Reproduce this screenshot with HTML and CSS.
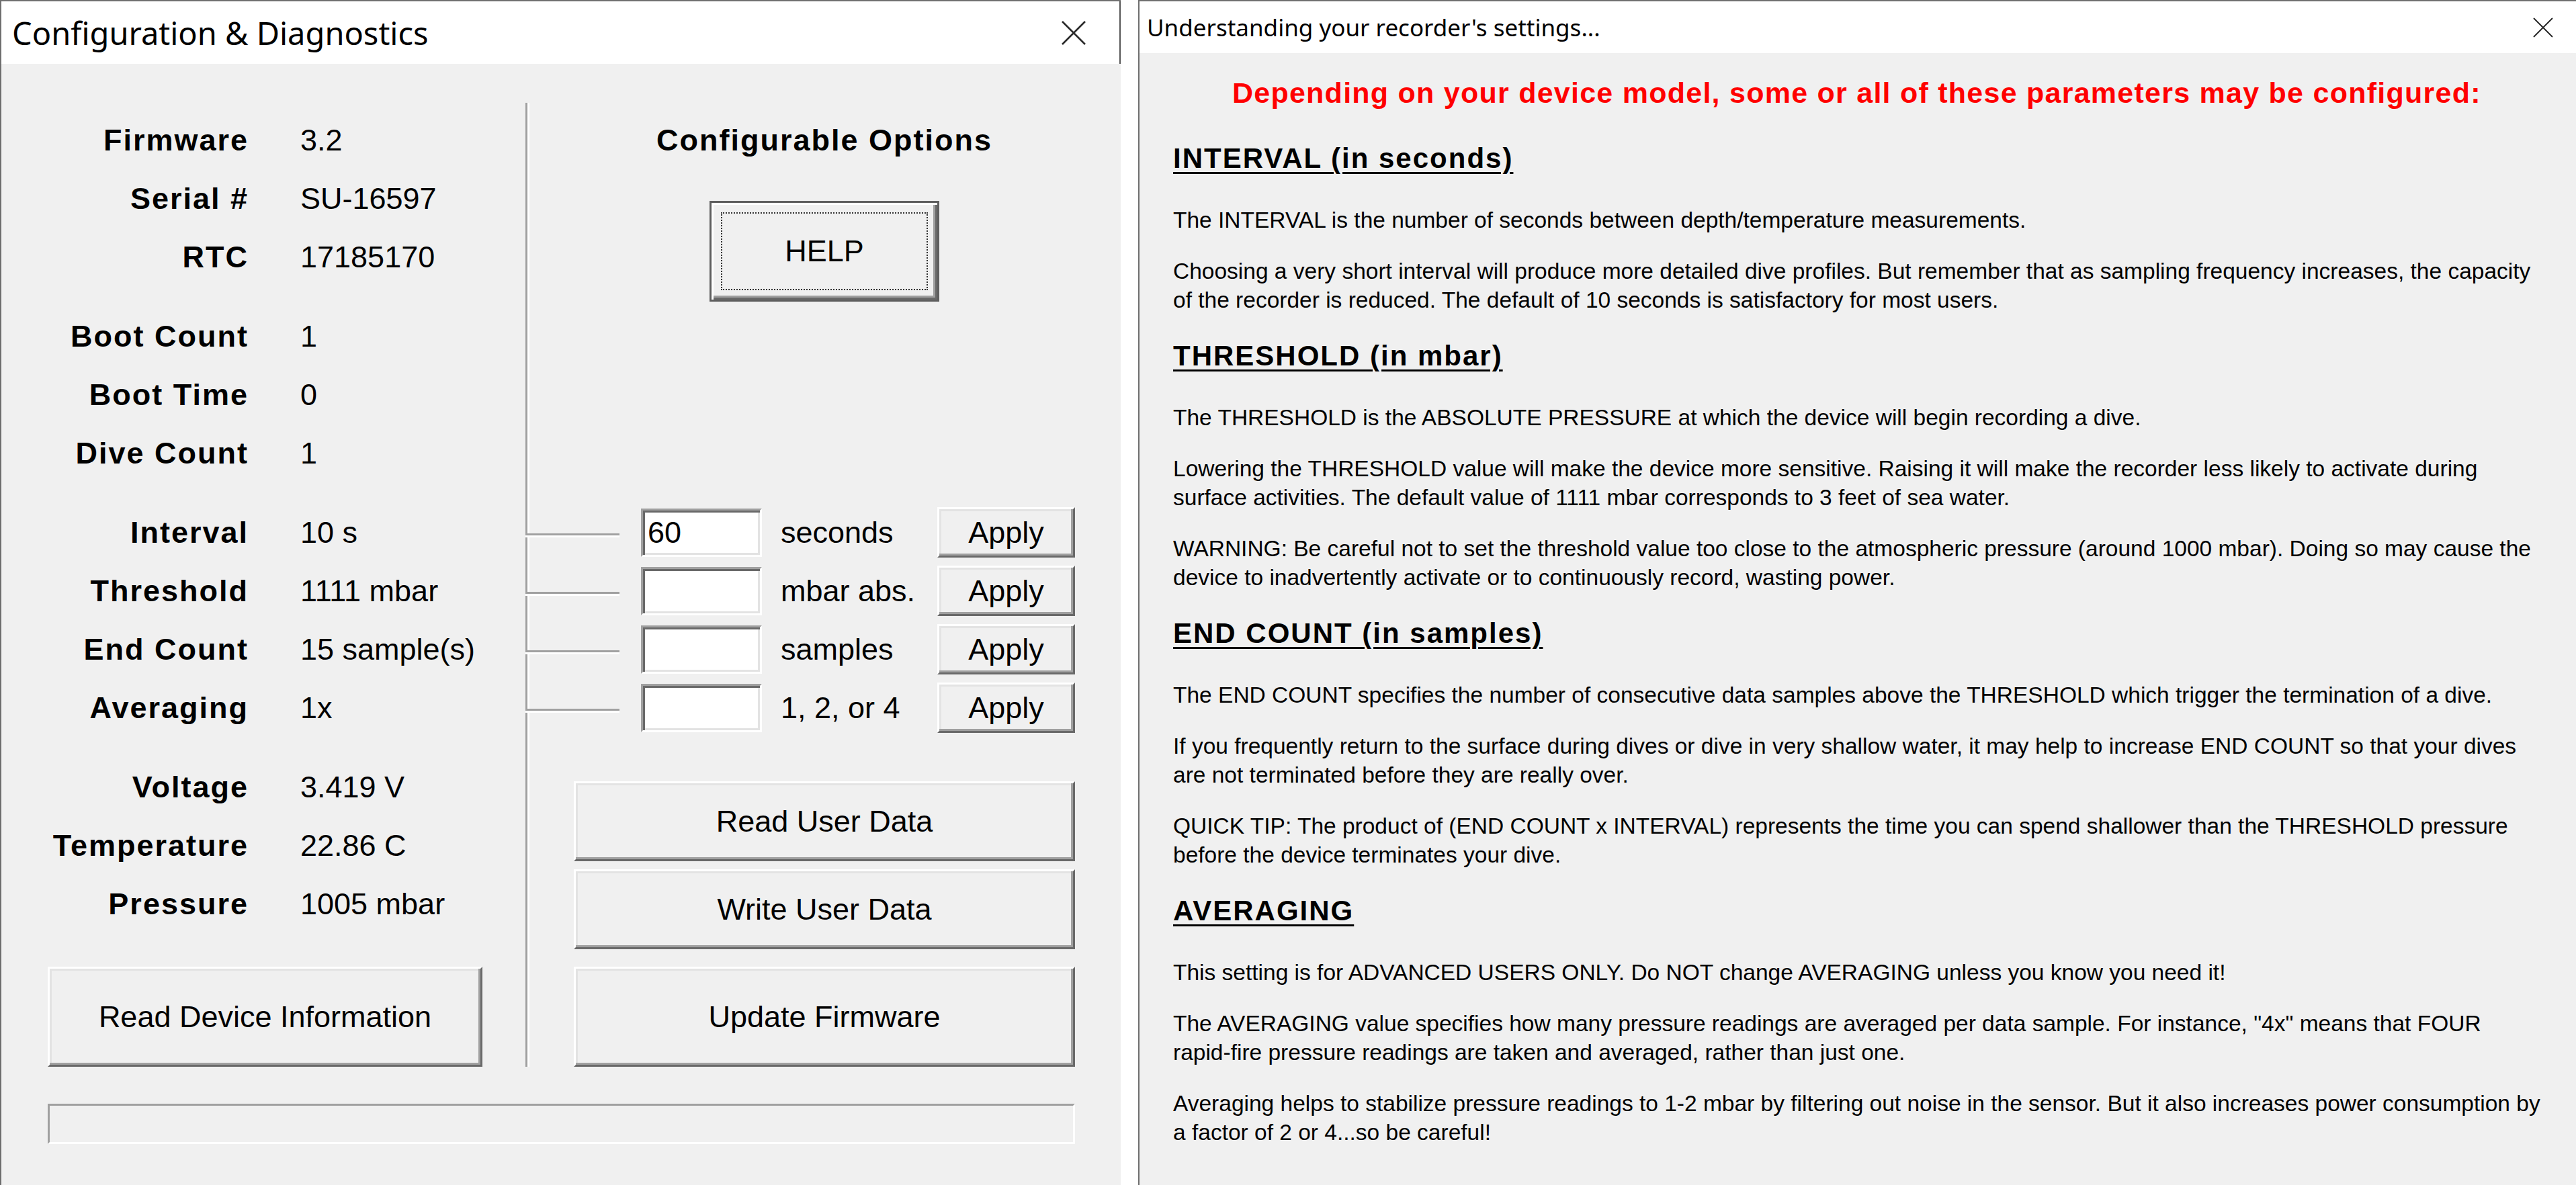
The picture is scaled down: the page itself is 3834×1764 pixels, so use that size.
FILE: index.html
```html
<!DOCTYPE html>
<html lang="en">
<head>
    <meta charset="UTF-8">
    <meta name="viewport" content="width=device-width, initial-scale=1.0">
    <title>Configuration &amp; Diagnostics</title>
    <link rel="stylesheet" href="styles.css">
</head>
<body>
    <div class="desktop">
        <!-- Configuration window -->
        <div class="window config-window">
            <div class="titlebar">
                <span class="title">Configuration &amp; Diagnostics</span>
                <svg class="close" width="38" height="38" viewBox="0 0 38 38">
                    <path d="M2 2L36 36M36 2L2 36" stroke="#2b2b2b" stroke-width="2.6" fill="none"/>
                </svg>
            </div>
            <div class="window-body">
                <div class="panels">
                    <div class="info-panel">
                        <div class="info-group">
                            <div class="info-row"><span class="info-label">Firmware</span><span class="info-value">3.2</span></div>
                            <div class="info-row"><span class="info-label">Serial #</span><span class="info-value">SU-16597</span></div>
                            <div class="info-row"><span class="info-label">RTC</span><span class="info-value">17185170</span></div>
                        </div>
                        <div class="info-group">
                            <div class="info-row"><span class="info-label">Boot Count</span><span class="info-value">1</span></div>
                            <div class="info-row"><span class="info-label">Boot Time</span><span class="info-value">0</span></div>
                            <div class="info-row"><span class="info-label">Dive Count</span><span class="info-value">1</span></div>
                        </div>
                        <div class="info-group">
                            <div class="info-row"><span class="info-label">Interval</span><span class="info-value">10 s</span></div>
                            <div class="info-row"><span class="info-label">Threshold</span><span class="info-value">1111 mbar</span></div>
                            <div class="info-row"><span class="info-label">End Count</span><span class="info-value">15 sample(s)</span></div>
                            <div class="info-row"><span class="info-label">Averaging</span><span class="info-value">1x</span></div>
                        </div>
                        <div class="info-group">
                            <div class="info-row"><span class="info-label">Voltage</span><span class="info-value">3.419 V</span></div>
                            <div class="info-row"><span class="info-label">Temperature</span><span class="info-value">22.86 C</span></div>
                            <div class="info-row"><span class="info-label">Pressure</span><span class="info-value">1005 mbar</span></div>
                        </div>
                        <button class="btn btn-read-info">Read Device Information</button>
                    </div>

                    <div class="options-panel">
                        <div class="options-title">Configurable Options</div>
                        <button class="btn btn-default btn-help">HELP</button>

                        <div class="settings">
                            <div class="setting-row">
                                <span class="connector"></span>
                                <input class="field" type="text" value="60">
                                <span class="unit">seconds</span>
                                <button class="btn btn-apply">Apply</button>
                            </div>
                            <div class="setting-row">
                                <span class="connector"></span>
                                <input class="field" type="text" value="">
                                <span class="unit">mbar abs.</span>
                                <button class="btn btn-apply">Apply</button>
                            </div>
                            <div class="setting-row">
                                <span class="connector"></span>
                                <input class="field" type="text" value="">
                                <span class="unit">samples</span>
                                <button class="btn btn-apply">Apply</button>
                            </div>
                            <div class="setting-row">
                                <span class="connector"></span>
                                <input class="field" type="text" value="">
                                <span class="unit">1, 2, or 4</span>
                                <button class="btn btn-apply">Apply</button>
                            </div>
                        </div>

                        <button class="btn btn-wide btn-read-user">Read User Data</button>
                        <button class="btn btn-wide btn-write-user">Write User Data</button>
                        <button class="btn btn-wide btn-update">Update Firmware</button>
                    </div>
                </div>
                <div class="progress"></div>
            </div>
        </div>

        <!-- Help window -->
        <div class="window help-window">
            <div class="titlebar">
                <span class="title">Understanding your recorder's settings...</span>
                <svg class="close" width="30" height="30" viewBox="0 0 30 30">
                    <path d="M1 1L29 29M29 1L1 29" stroke="#2b2b2b" stroke-width="2" fill="none"/>
                </svg>
            </div>
            <div class="help-body">
                <p class="help-intro">Depending on your device model, some or all of these parameters may be configured:</p>

                <section class="help-section">
                    <h2>INTERVAL (in seconds)</h2>
                    <p>The INTERVAL is the number of seconds between depth/temperature measurements.</p>
                    <p>Choosing a very short interval will produce more detailed dive profiles. But remember that as sampling frequency increases, the capacity<br>of the recorder is reduced. The default of 10 seconds is satisfactory for most users.</p>
                </section>

                <section class="help-section">
                    <h2>THRESHOLD (in mbar)</h2>
                    <p>The THRESHOLD is the ABSOLUTE PRESSURE at which the device will begin recording a dive.</p>
                    <p>Lowering the THRESHOLD value will make the device more sensitive. Raising it will make the recorder less likely to activate during<br>surface activities. The default value of 1111 mbar corresponds to 3 feet of sea water.</p>
                    <p>WARNING: Be careful not to set the threshold value too close to the atmospheric pressure (around 1000 mbar). Doing so may cause the<br>device to inadvertently activate or to continuously record, wasting power.</p>
                </section>

                <section class="help-section">
                    <h2>END COUNT (in samples)</h2>
                    <p>The END COUNT specifies the number of consecutive data samples above the THRESHOLD which trigger the termination of a dive.</p>
                    <p>If you frequently return to the surface during dives or dive in very shallow water, it may help to increase END COUNT so that your dives<br>are not terminated before they are really over.</p>
                    <p>QUICK TIP: The product of (END COUNT x INTERVAL) represents the time you can spend shallower than the THRESHOLD pressure<br>before the device terminates your dive.</p>
                </section>

                <section class="help-section">
                    <h2>AVERAGING</h2>
                    <p>This setting is for ADVANCED USERS ONLY. Do NOT change AVERAGING unless you know you need it!</p>
                    <p>The AVERAGING value specifies how many pressure readings are averaged per data sample. For instance, &quot;4x&quot; means that FOUR<br>rapid-fire pressure readings are taken and averaged, rather than just one.</p>
                    <p>Averaging helps to stabilize pressure readings to 1-2 mbar by filtering out noise in the sensor. But it also increases power consumption by<br>a factor of 2 or 4...so be careful!</p>
                </section>
            </div>
        </div>
    </div>
</body>
</html>
```

FILE: styles.css
```css
body {
    margin: 0;
    background-color: #fff;
    font-family: "Liberation Sans", Arial, sans-serif;
    color: #000;
}

.desktop {
    display: flex;
    gap: 26px;
    height: 1764px;
    overflow: hidden;
}

.window {
    display: flex;
    flex-direction: column;
    background-color: #f0f0f0;
    border-top: 2px solid #707070;
    border-left: 2px solid #6e6e6e;
}

.config-window {
    flex: none;
    width: 1666px;
}

.help-window {
    flex: 1;
}

/* title bars */
.titlebar {
    flex: none;
    display: flex;
    align-items: center;
    justify-content: space-between;
    background-color: #fff;
    font-family: "Noto Sans", "Open Sans", sans-serif;
    white-space: nowrap;
}

.config-window .titlebar {
    height: 93px;
    padding: 0 49px 0 16px;
    font-size: 47px;
    border-right: 2px solid #555;
}

.help-window .titlebar {
    height: 77px;
    padding: 0 41px 0 11px;
    font-size: 35px;
}

.close {
    display: block;
}

/* configuration window */
.window-body {
    padding: 58px 0 0 69px;
}

.panels {
    display: flex;
}

.info-panel {
    width: 711px;
    padding-top: 12px;
    display: flex;
    flex-direction: column;
}

.info-group + .info-group {
    margin-top: 31px;
}

.info-row {
    display: flex;
    height: 87px;
    line-height: 87px;
    font-size: 45px;
    white-space: nowrap;
}

.info-label {
    width: 299px;
    text-align: right;
    font-weight: bold;
    letter-spacing: 2px;
}

.info-value {
    margin-left: 77px;
}

.options-panel {
    width: 746px;
    padding: 12px 68px 0 69px;
    border-left: 3px solid #a0a0a0;
    box-shadow: inset 3px 0 0 #fff;
    display: flex;
    flex-direction: column;
}

.options-title {
    height: 87px;
    line-height: 87px;
    font-size: 45px;
    font-weight: bold;
    letter-spacing: 2px;
    text-align: center;
    white-space: nowrap;
}

/* classic 3D buttons */
.btn {
    box-sizing: border-box;
    padding: 0;
    background-color: #f0f0f0;
    border: 3px solid;
    border-color: #fff #696969 #696969 #fff;
    box-shadow: inset -3px -3px 0 #a0a0a0, inset 3px 3px 0 #e3e3e3;
    font-family: "Liberation Sans", Arial, sans-serif;
    font-size: 45px;
    color: #000;
    white-space: nowrap;
}

.btn-default {
    position: relative;
    border-color: #5e5e5e;
    box-shadow: inset 3px 3px 0 #fff, inset -3px -3px 0 #696969, inset -6px -6px 0 #a0a0a0;
}

.btn-default::after {
    content: "";
    position: absolute;
    top: 14px;
    left: 14px;
    right: 14px;
    bottom: 14px;
    border: 2px dotted #333;
}

.btn-help {
    align-self: center;
    margin-top: 47px;
    width: 342px;
    height: 150px;
}

.btn-read-info {
    margin-top: 50px;
    width: 647px;
    height: 149px;
}

.settings {
    margin-top: 300px;
    margin-left: -72px;
}

.setting-row {
    display: flex;
    align-items: center;
    height: 87px;
    font-size: 45px;
    white-space: nowrap;
}

.connector {
    flex: none;
    width: 140px;
    margin-top: 6px;
    border-top: 3px solid #a0a0a0;
    box-shadow: 0 3px 0 #fff;
}

.field {
    flex: none;
    box-sizing: border-box;
    width: 180px;
    height: 72px;
    margin: 0 0 0 32px;
    padding: 0 0 0 7px;
    background-color: #fff;
    border: 3px solid;
    border-color: #a0a0a0 #fff #fff #a0a0a0;
    box-shadow: inset 3px 3px 0 #696969, inset -3px -3px 0 #e3e3e3;
    font-family: "Liberation Sans", Arial, sans-serif;
    font-size: 45px;
    color: #000;
    outline: none;
}

.unit {
    flex: 1;
    margin-left: 28px;
}

.btn-apply {
    flex: none;
    width: 205px;
    height: 75px;
}

.btn-wide {
    width: 100%;
}

.btn-read-user {
    margin-top: 66px;
    height: 119px;
}

.btn-write-user {
    margin-top: 12px;
    height: 119px;
}

.btn-update {
    margin-top: 26px;
    height: 149px;
}

.progress {
    box-sizing: border-box;
    width: 1529px;
    height: 60px;
    margin-top: 55px;
    border: 3px solid;
    border-color: #a0a0a0 #fff #fff #a0a0a0;
}

/* help window */
.help-body {
    padding: 34px 60px 0 50px;
    white-space: nowrap;
}

.help-intro {
    margin: 0 0 48px;
    color: #ff0000;
    font-size: 43px;
    line-height: 50px;
    font-weight: bold;
    letter-spacing: 1.25px;
    text-align: center;
}

.help-section h2 {
    margin: 37px 0 45px;
    font-size: 42px;
    line-height: 50px;
    letter-spacing: 2px;
    text-decoration: underline;
    text-decoration-thickness: 3px;
    text-underline-offset: 6px;
}

.help-section p {
    margin: 0 0 33px;
    font-size: 33.5px;
    line-height: 43px;
}
```
